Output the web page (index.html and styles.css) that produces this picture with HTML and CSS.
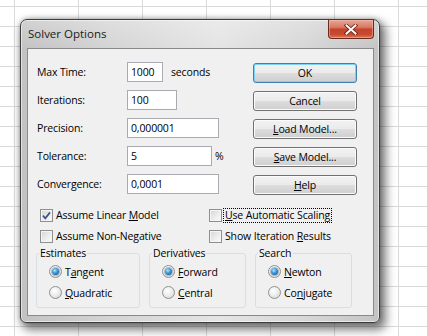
FILE: index.html
```html
<!DOCTYPE html>
<html>
<head>
<meta charset="utf-8">
<title>Solver Options</title>
<link rel="stylesheet" href="styles.css">
</head>
<body>
<div class="window">
  <div class="titlebar">
    <span class="title">Solver Options</span>
    <span class="close"><svg width="14" height="11" viewBox="0 0 14 11"><path d="M2.5 1.5 L11.5 9.5 M11.5 1.5 L2.5 9.5" stroke="#6b1d12" stroke-width="3.6" stroke-linecap="square"/><path d="M2.5 1.5 L11.5 9.5 M11.5 1.5 L2.5 9.5" stroke="#ffffff" stroke-width="2" stroke-linecap="square"/></svg></span>
  </div>
  <div class="client">
    <div class="top">
      <div class="fields">
        <div class="row"><span class="lbl">Max Time:</span><input class="inp w-time" type="text" value="1000"><span class="unit">seconds</span></div>
        <div class="row"><span class="lbl">Iterations:</span><input class="inp w-iter" type="text" value="100"></div>
        <div class="row"><span class="lbl">Precision:</span><input class="inp w-wide" type="text" value="0,000001"></div>
        <div class="row"><span class="lbl">Tolerance:</span><input class="inp w-tol" type="text" value="5"><span class="pct">%</span></div>
        <div class="row"><span class="lbl">Convergence:</span><input class="inp w-wide" type="text" value="0,0001"></div>
      </div>
      <div class="buttons">
        <span class="btn default">OK</span>
        <span class="btn">Cancel</span>
        <span class="btn"><u>L</u>oad Model...</span>
        <span class="btn"><u>S</u>ave Model...</span>
        <span class="btn"><u>H</u>elp</span>
      </div>
    </div>
    <div class="checks">
      <div class="check-col left">
        <div class="check-row"><span class="cb"><svg width="11" height="11" viewBox="0 0 11 11"><path d="M2 5.6 L4.3 8.3 L9 2.4" fill="none" stroke="#3e5687" stroke-width="1.7"/></svg></span><span class="clbl">Assume Linear <u>M</u>odel</span></div>
        <div class="check-row"><span class="cb"></span><span class="clbl">Assume Non-Ne<u>g</u>ative</span></div>
      </div>
      <div class="check-col">
        <div class="check-row"><span class="cb"></span><span class="clbl focus"><u>U</u>se Automatic Scaling</span></div>
        <div class="check-row"><span class="cb"></span><span class="clbl">Show Iteration <u>R</u>esults</span></div>
      </div>
    </div>
    <div class="groups">
      <fieldset class="group g-est">
        <legend>Estimates</legend>
        <div class="radio-row"><span class="rb on"><span class="dot"></span></span><span>T<u>a</u>ngent</span></div>
        <div class="radio-row"><span class="rb"></span><span><u>Q</u>uadratic</span></div>
      </fieldset>
      <fieldset class="group g-der">
        <legend>Derivatives</legend>
        <div class="radio-row"><span class="rb on"><span class="dot"></span></span><span><u>F</u>orward</span></div>
        <div class="radio-row"><span class="rb"></span><span><u>C</u>entral</span></div>
      </fieldset>
      <fieldset class="group g-sea">
        <legend>Search</legend>
        <div class="radio-row"><span class="rb on"><span class="dot"></span></span><span><u>N</u>ewton</span></div>
        <div class="radio-row"><span class="rb"></span><span>Co<u>n</u>jugate</span></div>
      </fieldset>
    </div>
  </div>
</div>
</body>
</html>
```
FILE: styles.css
```css
* { box-sizing: border-box; }

body {
  margin: 0;
  width: 427px;
  height: 336px;
  padding: 19px 0 0 20px;
  overflow: hidden;
  background-color: #ffffff;
  background-image:
    linear-gradient(to right, #d9dadc 0 1px, transparent 1px),
    linear-gradient(to bottom, #d9dadc 0 1px, transparent 1px);
  background-size: 64px 100%, 100% 20px;
  background-position: 14px 0, 0 6px;
  font-family: "Open Sans", "Liberation Sans", sans-serif;
  font-size: 10.5px;
  letter-spacing: -0.15px;
  color: #000;
}

.window {
  width: 360px;
  height: 304px;
  border: 1px solid #3c3c3c;
  border-radius: 7px 7px 6px 6px;
  background:
    linear-gradient(to bottom, rgba(255,255,255,0.25), rgba(255,255,255,0) 30px),
    linear-gradient(to right, #c2c2c2 0%, #d4d4d4 25%, #e4e4e4 55%, #d6d6d6 80%, #c4c4c4 100%);
  box-shadow:
    inset 0 0 0 1px rgba(255,255,255,0.55),
    4px 5px 10px 2px rgba(0,0,0,0.5),
    0 0 5px rgba(0,0,0,0.3);
  padding: 0 5px 6px 6px;
  display: flex;
  flex-direction: column;
}

.titlebar {
  height: 28px;
  display: flex;
  align-items: flex-start;
}

.title {
  margin: 6px 0 0 1px;
  font-size: 11.5px;
  line-height: 16px;
  letter-spacing: 0;
  color: #1a1a1a;
}

.close {
  margin-left: auto;
  width: 46px;
  height: 19px;
  border: 1px solid #6a2a20;
  border-top: none;
  border-radius: 0 0 4px 4px;
  background: linear-gradient(to bottom, #e6a597 0%, #d97a66 40%, #c4432c 52%, #c84a2f 80%, #dc7a55 100%);
  box-shadow: inset 0 0 0 1px rgba(255,200,180,0.45);
  display: flex;
  align-items: center;
  justify-content: center;
}

.client {
  flex: 1;
  background: #f0f0f0;
  border: 1px solid #8a8a8a;
  padding: 13px 16px 0 9px;
}

.top {
  display: flex;
  justify-content: space-between;
}

.fields {
  display: flex;
  flex-direction: column;
  gap: 8px;
}

.row {
  height: 20px;
  display: flex;
  align-items: center;
}

.lbl {
  width: 90px;
}

.inp {
  height: 20px;
  border: 1px solid #a9abb0;
  background: #fff;
  padding: 0 0 0 3px;
  margin: 0;
  font: inherit;
  letter-spacing: inherit;
  color: #000;
  outline: none;
}

.w-time { width: 36px; }
.w-iter { width: 50px; }
.w-wide { width: 92px; }
.w-tol { width: 85px; }

.unit { margin-left: 8px; }
.pct { margin-left: 3px; }

.buttons {
  display: flex;
  flex-direction: column;
  gap: 8px;
  padding-top: 1px;
}

.btn {
  width: 104px;
  height: 20px;
  border: 1px solid #707070;
  border-radius: 3px;
  background: linear-gradient(to bottom, #f2f2f2 0%, #ebebeb 48%, #dddddd 52%, #cfcfcf 100%);
  box-shadow: inset 0 0 0 1px #fbfbfb;
  display: flex;
  align-items: center;
  justify-content: center;
}

.btn.default {
  border-color: #3c7fb1;
  background: linear-gradient(to bottom, #eaf6fd 0%, #d9f0fc 48%, #bee6fd 52%, #a7d9f5 100%);
  box-shadow: inset 0 0 0 1px #7ed2f6;
  background: linear-gradient(to bottom, #f2f2f2 0%, #ebebeb 48%, #dddddd 52%, #cfcfcf 100%);
}

.checks {
  display: flex;
  margin-top: 10px;
  padding-left: 3px;
}

.check-col.left { width: 169px; }

.check-row {
  height: 21px;
  display: flex;
  align-items: center;
  gap: 1px;
}

.cb {
  width: 13px;
  height: 13px;
  border: 1px solid #8e8f8f;
  background: linear-gradient(135deg, #d3d5d8 0%, #eeeeee 60%, #fbfbfb 100%);
  box-shadow: inset 0 0 0 1px #f4f4f4;
  display: flex;
  align-items: center;
  justify-content: center;
}

.clbl {
  padding: 0 1px;
  line-height: 13px;
  border: 1px dotted transparent;
}

.clbl.focus { border-color: #000; }

.groups {
  display: flex;
  gap: 9px;
  margin: -2px 0 0 -1px;
}

.group {
  margin: 0;
  padding: 0 0 4px 12px;
  border: 1px solid #d5dfe5;
  border-radius: 3px;
  min-width: 0;
}

.g-est { width: 104px; }
.g-der { width: 97px; }
.g-sea { width: 97px; }

.group legend {
  padding: 0 1px;
  margin-left: -10px;
  line-height: 16px;
}

.radio-row {
  height: 21px;
  display: flex;
  align-items: center;
  gap: 3px;
}

.rb {
  width: 13px;
  height: 13px;
  border-radius: 50%;
  border: 1px solid #8f9090;
  background: radial-gradient(circle at 40% 35%, #ffffff 0%, #f0f0f0 40%, #cfd0d2 100%);
  display: flex;
  align-items: center;
  justify-content: center;
}

.rb .dot {
  width: 7px;
  height: 7px;
  border-radius: 50%;
  background: radial-gradient(circle at 40% 35%, #bfe6fb 0%, #4aa6e0 35%, #1a5d9c 80%, #0f3f72 100%);
  box-shadow: 0 0 0 1px rgba(60,80,110,0.35);
}
```
